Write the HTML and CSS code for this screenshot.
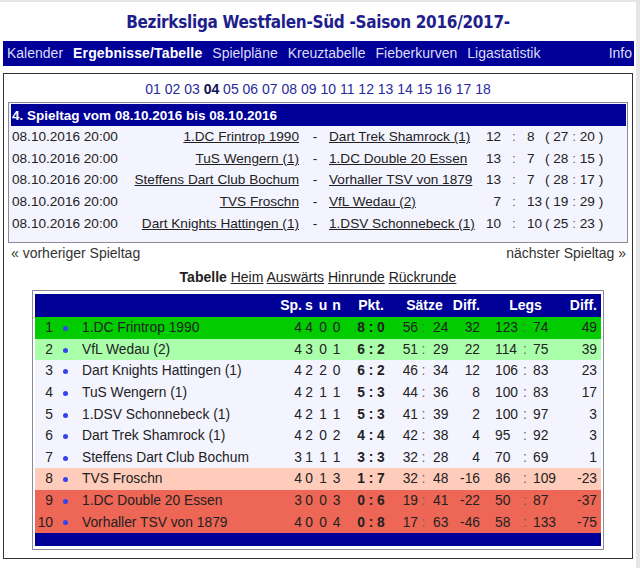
FILE: index.html
```html
<!DOCTYPE html>
<html lang="de">

<head>
    <meta charset="UTF-8">
    <meta name="viewport" content="width=device-width, initial-scale=1.0">
    <title>Bezirksliga Westfalen-Süd</title>
    <link rel="stylesheet" href="styles.css">
</head>

<body>
    <div class="page">
        <h1>Bezirksliga Westfalen-Süd -Saison 2016/2017-</h1>

        <nav>
            <a href="#">Kalender</a>
            <a href="#" class="active">Ergebnisse/Tabelle</a>
            <a href="#">Spielpläne</a>
            <a href="#">Kreuztabelle</a>
            <a href="#">Fieberkurven</a>
            <a href="#">Ligastatistik</a>
            <a href="#" class="info">Info</a>
        </nav>

        <main class="content">
            <div class="rounds">
                <a href="#">01</a> <a href="#">02</a> <a href="#">03</a> <b>04</b> <a href="#">05</a>
                <a href="#">06</a> <a href="#">07</a> <a href="#">08</a> <a href="#">09</a> <a href="#">10</a>
                <a href="#">11</a> <a href="#">12</a> <a href="#">13</a> <a href="#">14</a> <a href="#">15</a>
                <a href="#">16</a> <a href="#">17</a> <a href="#">18</a>
            </div>

            <div class="matchbox">
                <table class="matches">
                    <colgroup>
                        <col style="width:122px">
                        <col style="width:172px">
                        <col style="width:20px">
                        <col style="width:158px">
                        <col style="width:18px">
                        <col style="width:26px">
                        <col style="width:17px">
                        <col style="width:82px">
                    </colgroup>
                    <thead>
                        <tr>
                            <th colspan="8">4. Spieltag vom 08.10.2016 bis 08.10.2016</th>
                        </tr>
                    </thead>
                    <tbody id="matchRows">
                        <!-- rows filled by script -->
                    </tbody>
                </table>
            </div>

            <div class="daynav">
                <a href="#">« vorheriger Spieltag</a>
                <a href="#">nächster Spieltag »</a>
            </div>

            <div class="tabs">
                <b>Tabelle</b> <a href="#">Heim</a> <a href="#">Auswärts</a> <a href="#">Hinrunde</a> <a href="#">Rückrunde</a>
            </div>

            <div class="tablebox">
                <table class="standings">
                    <colgroup>
                        <col style="width:21px">
                        <col style="width:18px">
                        <col style="width:202px">
                        <col style="width:26px">
                        <col style="width:14px">
                        <col style="width:14px">
                        <col style="width:13px">
                        <col style="width:56px">
                        <col style="width:19px">
                        <col style="width:11px">
                        <col style="width:21px">
                        <col style="width:30px">
                        <col style="width:40px">
                        <col style="width:10px">
                        <col style="width:30px">
                        <col style="width:41px">
                    </colgroup>
                    <thead>
                        <tr>
                            <th colspan="3"></th>
                            <th class="r">Sp.</th>
                            <th>s</th>
                            <th>u</th>
                            <th>n</th>
                            <th>Pkt.</th>
                            <th colspan="3">Sätze</th>
                            <th class="r">Diff.</th>
                            <th colspan="3" class="legs">Legs</th>
                            <th class="r last">Diff.</th>
                        </tr>
                    </thead>
                    <tbody id="tableRows">
                        <!-- rows filled by script -->
                    </tbody>
                    <tfoot>
                        <tr>
                            <td colspan="16"></td>
                        </tr>
                    </tfoot>
                </table>
            </div>
        </main>
    </div>

    <script>
        const matches = [
            ['1.DC Frintrop 1990', 'Dart Trek Shamrock (1)', 12, 8, 27, 20],
            ['TuS Wengern (1)', '1.DC Double 20 Essen', 13, 7, 28, 15],
            ['Steffens Dart Club Bochum', 'Vorhaller TSV von 1879', 13, 7, 28, 17],
            ['TVS Froschn', 'VfL Wedau (2)', 7, 13, 19, 29],
            ['Dart Knights Hattingen (1)', '1.DSV Schonnebeck (1)', 10, 10, 25, 23]
        ];

        const standings = [
            ['1.DC Frintrop 1990', 4, 4, 0, 0, 8, 0, 56, 24, 123, 74, 'up1'],
            ['VfL Wedau (2)', 4, 3, 0, 1, 6, 2, 51, 29, 114, 75, 'up2'],
            ['Dart Knights Hattingen (1)', 4, 2, 2, 0, 6, 2, 46, 34, 106, 83, ''],
            ['TuS Wengern (1)', 4, 2, 1, 1, 5, 3, 44, 36, 100, 83, ''],
            ['1.DSV Schonnebeck (1)', 4, 2, 1, 1, 5, 3, 41, 39, 100, 97, ''],
            ['Dart Trek Shamrock (1)', 4, 2, 0, 2, 4, 4, 42, 38, 95, 92, ''],
            ['Steffens Dart Club Bochum', 3, 1, 1, 1, 3, 3, 32, 28, 70, 69, ''],
            ['TVS Froschn', 4, 0, 1, 3, 1, 7, 32, 48, 86, 109, 'down1'],
            ['1.DC Double 20 Essen', 3, 0, 0, 3, 0, 6, 19, 41, 50, 87, 'down2'],
            ['Vorhaller TSV von 1879', 4, 0, 0, 4, 0, 8, 17, 63, 58, 133, 'down2']
        ];

        const matchRows = document.getElementById('matchRows');
        matches.forEach(m => {
            const row = matchRows.insertRow();
            row.innerHTML =
                '<td class="date">08.10.2016 20:00</td>' +
                '<td class="home"><a href="#">' + m[0] + '</a></td>' +
                '<td class="dash">-</td>' +
                '<td class="away"><a href="#">' + m[1] + '</a></td>' +
                '<td class="r">' + m[2] + '</td>' +
                '<td class="c"><span class="colon">:</span></td>' +
                '<td>' + m[3] + '</td>' +
                '<td class="legs">( ' + m[4] + ' <span class="colon">:</span> ' + m[5] + ' )</td>';
        });

        const tableRows = document.getElementById('tableRows');
        standings.forEach((t, index) => {
            const row = tableRows.insertRow();
            if (t[11]) row.className = t[11];
            row.innerHTML =
                '<td class="rank">' + (index + 1) + '</td>' +
                '<td class="c"><span class="dot"></span></td>' +
                '<td class="team">' + t[0] + '</td>' +
                '<td class="r">' + t[1] + '</td>' +
                '<td class="c">' + t[2] + '</td>' +
                '<td class="c">' + t[3] + '</td>' +
                '<td class="c">' + t[4] + '</td>' +
                '<td class="c pts">' + t[5] + ' : ' + t[6] + '</td>' +
                '<td class="r">' + t[7] + '</td>' +
                '<td class="c"><span class="colon">:</span></td>' +
                '<td class="s2">' + t[8] + '</td>' +
                '<td class="r">' + (t[7] - t[8]) + '</td>' +
                '<td class="l1">' + t[9] + '</td>' +
                '<td class="c"><span class="colon">:</span></td>' +
                '<td class="l2">' + t[10] + '</td>' +
                '<td class="r last">' + (t[9] - t[10]) + '</td>';
        });
    </script>
</body>

</html>
```

FILE: styles.css
```css
body {
    margin: 0;
    padding: 0;
    background-color: #e6e6e6;
    font-family: "Liberation Sans", Arial, sans-serif;
    font-size: 14px;
    color: #222;
}

a {
    color: #222;
}

.page {
    width: 636px;
    height: 566px;
    margin-top: 2px;
    background-color: #fff;
    overflow: hidden;
}

h1 {
    margin: 0;
    padding: 9px 0 8px;
    line-height: 22px;
    text-align: center;
    font-family: "DejaVu Sans Condensed", "DejaVu Sans", sans-serif;
    font-size: 17px;
    font-weight: bold;
    letter-spacing: -0.3px;
    color: #1e1e8c;
}

nav {
    display: flex;
    gap: 10px;
    margin: 0 2px 0 3px;
    padding: 0 4px;
    height: 25px;
    line-height: 25px;
    background-color: #000099;
}

nav a {
    color: #dcdcf4;
    text-decoration: none;
}

nav a.active {
    color: #fff;
    font-weight: bold;
    letter-spacing: 0.15px;
}

nav a.info {
    margin-left: auto;
    margin-right: -2px;
}

.content {
    display: block;
    margin: 7px 3px 0 3px;
    padding: 6px 4px 8px;
    border: 1px solid #333;
}

.rounds {
    line-height: 18px;
    text-align: center;
    color: #2a2aa0;
}

.rounds a {
    color: #2a2aa0;
    text-decoration: none;
}

.rounds b {
    color: #111155;
}

.matchbox {
    margin-top: 4px;
    padding: 1px 2px 8px;
    border: 1px solid #8a8a9a;
    background-color: #f4f4ff;
}

table {
    border-collapse: collapse;
    table-layout: fixed;
}

.matches {
    width: 615px;
}

.matches th {
    height: 22px;
    padding: 0 1px;
    text-align: left;
    font-size: 13.5px;
    color: #fff;
    background-color: #000099;
}

.matches td {
    height: 21.6px;
    padding: 0;
    font-size: 13.6px;
    white-space: nowrap;
}

.matches .date {
    padding-left: 1px;
}

.matches .home {
    text-align: right;
    padding-right: 6px;
}

.matches .dash {
    text-align: center;
}

.matches .away {
    padding-left: 4px;
}

.matches .legs {
    padding-left: 1px;
}

.r {
    text-align: right;
}

.c {
    text-align: center;
}

.colon {
    color: #666;
}

.daynav {
    display: flex;
    justify-content: space-between;
    margin-top: 1px;
    padding: 0 2px 0 3px;
    line-height: 18px;
    color: #333;
}

.daynav a {
    color: #333;
    text-decoration: none;
}

.tabs {
    margin-top: 6px;
    line-height: 18px;
    text-align: center;
}

.tablebox {
    width: 566px;
    margin: 4px auto 0;
    padding: 3px 2px;
    border: 1px solid #8a8a9a;
}

.standings {
    width: 566px;
}

.standings th {
    height: 23px;
    padding: 0;
    font-weight: bold;
    color: #fff;
    background-color: #000099;
}

.standings th.legs {
    padding-left: 11px;
}

.standings td {
    height: 21.6px;
    padding: 0;
    font-size: 13.8px;
    white-space: nowrap;
    background-color: #f4f4ff;
}

.standings tr.up1 td {
    background-color: #00cc00;
}

.standings tr.up2 td {
    background-color: #aaffaa;
}

.standings tr.down1 td {
    background-color: #ffccbb;
}

.standings tr.down2 td {
    background-color: #ee6655;
}

.standings .rank {
    text-align: right;
    padding-right: 3px;
}

.standings .team {
    padding-left: 8px;
}

.standings .pts {
    font-weight: bold;
}

.standings .s2 {
    padding-left: 4px;
}

.standings .l1 {
    padding-left: 15px;
}

.standings .l2 {
    padding-left: 3px;
}

.standings .last {
    padding-right: 4px;
}

.dot {
    display: inline-block;
    width: 5px;
    height: 5px;
    border-radius: 50%;
    background-color: #3344ee;
    vertical-align: middle;
}

.standings tfoot td {
    height: 13px;
    background-color: #000099;
}
```
